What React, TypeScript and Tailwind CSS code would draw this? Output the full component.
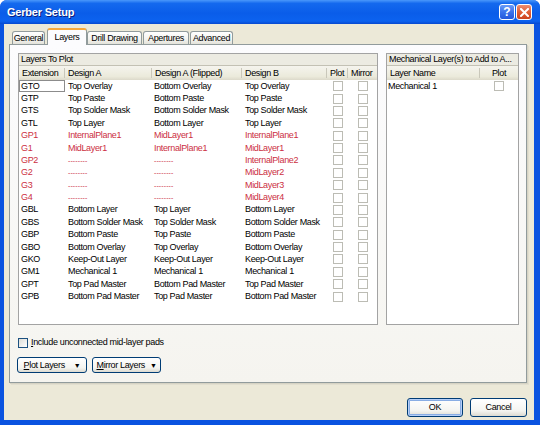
import React from 'react';

type Row = { ext: string; a: string; af: string; b: string; red?: boolean };

const dash = '--------';

const rows: Row[] = [
  { ext: 'GTO', a: 'Top Overlay', af: 'Bottom Overlay', b: 'Top Overlay' },
  { ext: 'GTP', a: 'Top Paste', af: 'Bottom Paste', b: 'Top Paste' },
  { ext: 'GTS', a: 'Top Solder Mask', af: 'Bottom Solder Mask', b: 'Top Solder Mask' },
  { ext: 'GTL', a: 'Top Layer', af: 'Bottom Layer', b: 'Top Layer' },
  { ext: 'GP1', a: 'InternalPlane1', af: 'MidLayer1', b: 'InternalPlane1', red: true },
  { ext: 'G1', a: 'MidLayer1', af: 'InternalPlane1', b: 'MidLayer1', red: true },
  { ext: 'GP2', a: dash, af: dash, b: 'InternalPlane2', red: true },
  { ext: 'G2', a: dash, af: dash, b: 'MidLayer2', red: true },
  { ext: 'G3', a: dash, af: dash, b: 'MidLayer3', red: true },
  { ext: 'G4', a: dash, af: dash, b: 'MidLayer4', red: true },
  { ext: 'GBL', a: 'Bottom Layer', af: 'Top Layer', b: 'Bottom Layer' },
  { ext: 'GBS', a: 'Bottom Solder Mask', af: 'Top Solder Mask', b: 'Bottom Solder Mask' },
  { ext: 'GBP', a: 'Bottom Paste', af: 'Top Paste', b: 'Bottom Paste' },
  { ext: 'GBO', a: 'Bottom Overlay', af: 'Top Overlay', b: 'Bottom Overlay' },
  { ext: 'GKO', a: 'Keep-Out Layer', af: 'Keep-Out Layer', b: 'Keep-Out Layer' },
  { ext: 'GM1', a: 'Mechanical 1', af: 'Mechanical 1', b: 'Mechanical 1' },
  { ext: 'GPT', a: 'Top Pad Master', af: 'Bottom Pad Master', b: 'Top Pad Master' },
  { ext: 'GPB', a: 'Bottom Pad Master', af: 'Top Pad Master', b: 'Bottom Pad Master' },
];

const cols = 'grid grid-cols-[46px_87px_90px_85px_21px_29px]';

function ListCheck() {
  return <span className="block w-[10px] h-[10px] border border-[#bcbcb4] bg-white" />;
}

function HeadCell({ label, center, last }: { label: string; center?: boolean; last?: boolean }) {
  return (
    <div className={`relative flex items-center h-full whitespace-nowrap ${center ? 'justify-center' : 'pl-[3px]'}`}>
      {label}
      {!last && <span className="absolute right-0 top-[2px] bottom-[2px] w-px bg-[#c9c7ba]" />}
    </div>
  );
}

function Caption({ text }: { text: string }) {
  return (
    <div className="h-[12px] flex items-center pl-[2px] bg-[#ecebe2] border-b border-[#c3c1b4] whitespace-nowrap overflow-hidden">
      {text}
    </div>
  );
}

function Cell({ text, className = '' }: { text: string; className?: string }) {
  return (
    <div className={`whitespace-nowrap ${text === dash ? 'text-[7px] tracking-[0.1px]' : ''} ${className}`}>
      {text}
    </div>
  );
}

function Tab({ label, active, className = '' }: { label: string; active?: boolean; className?: string }) {
  if (active) {
    return (
      <div
        className={`relative z-10 -mb-px h-[17px] flex items-center justify-center whitespace-nowrap bg-[#fcfcfe] border-x border-[#919b9c] rounded-t-[3px] border-t-2 border-t-[#f7a83a] ${className}`}
      >
        {label}
      </div>
    );
  }
  return (
    <div
      className={`h-[13px] flex items-center justify-center whitespace-nowrap bg-[linear-gradient(180deg,#ffffff_0%,#f3f3ef_60%,#e3e2da_100%)] border-x border-t border-[#919b9c] rounded-t-[3px] ${className}`}
    >
      {label}
    </div>
  );
}

function XpButton({ children, className = '', isDefault }: { children: React.ReactNode; className?: string; isDefault?: boolean }) {
  return (
    <div
      className={`flex items-center justify-center rounded-[3px] border border-[#003c74] bg-[linear-gradient(180deg,#ffffff_0%,#f4f4f0_70%,#dcdad0_100%)] ${
        isDefault ? 'shadow-[inset_0_0_0_1px_#b6cff8,inset_0_0_0_2px_#89ade4]' : ''
      } ${className}`}
    >
      {children}
    </div>
  );
}

export default function App() {
  return (
    <div className="w-[540px] h-[425px] bg-white font-['Liberation_Sans',Arial,sans-serif] text-[9px] tracking-[-0.35px] text-black leading-none">
      <div className="w-[540px] h-[425px] flex flex-col rounded-t-[7px] bg-[#0a53e0]">
        {/* Title bar */}
        <div className="h-[24px] shrink-0 flex items-center pl-[7px] pr-[8px] rounded-t-[7px] bg-[linear-gradient(180deg,#4a98fb_0%,#1469ee_14%,#0a5de9_55%,#0c62ef_88%,#0749cf_100%)]">
          <span className="text-white font-bold text-[11px] tracking-[-0.2px] [text-shadow:1px_1px_0_#0a1e80]">
            Gerber Setup
          </span>
          <div className="ml-auto flex gap-[1px]">
            <div className="w-[16px] h-[16px] rounded-[3px] border border-white bg-[linear-gradient(180deg,#6a9cf8_0%,#3a72ec_50%,#2357dc_100%)] flex items-center justify-center text-white font-bold text-[12px] tracking-normal">
              ?
            </div>
            <div className="w-[16px] h-[16px] rounded-[3px] border border-white bg-[linear-gradient(180deg,#ec8e70_0%,#e05e36_50%,#cc441f_100%)] flex items-center justify-center">
              <svg width="9" height="9" viewBox="0 0 9 9">
                <path d="M1 1 L8 8 M8 1 L1 8" stroke="white" strokeWidth="2" strokeLinecap="square" />
              </svg>
            </div>
          </div>
        </div>

        {/* Body */}
        <div className="flex-1 ml-[4px] mr-[6px] mb-[5px] bg-[#ece9d8] flex flex-col">
          {/* Tabs */}
          <div className="h-[20px] shrink-0 pt-[4px] pl-[8px] flex items-end">
            <Tab label="General" className="w-[33px]" />
            <Tab label="Layers" active className="w-[40px] ml-[2px]" />
            <Tab label="Drill Drawing" className="w-[55px]" />
            <Tab label="Apertures" className="w-[46px] ml-[1px]" />
            <Tab label="Advanced" className="w-[43px] ml-[1px]" />
          </div>

          {/* Tab panel */}
          <div className="ml-[5px] mr-[7px] h-[339px] shrink-0 border border-[#919b9c] bg-[linear-gradient(180deg,#fcfcfe_0%,#f5f4ef_100%)] shadow-[1px_1px_0_#d6d3c4,2px_2px_0_#e2dfd0] pt-[8px] pl-[8px] pr-[7px] flex flex-col">
            <div className="h-[272px] flex gap-[8px]">
              {/* Layers To Plot */}
              <div className="w-[360px] border border-[#a3a3a3] flex flex-col bg-white">
                <Caption text="Layers To Plot" />
                <div className={`${cols} h-[14px] bg-[linear-gradient(180deg,#f5f4ee_0%,#ebeadb_75%,#dcd9ca_100%)]`}>
                  <HeadCell label="Extension" />
                  <HeadCell label="Design A" />
                  <HeadCell label="Design A (Flipped)" />
                  <HeadCell label="Design B" />
                  <HeadCell label="Plot" />
                  <HeadCell label="Mirror" last />
                </div>
                <div className="flex-1 bg-white">
                  {rows.map((r, i) => (
                    <div
                      key={r.ext}
                      className={`${cols} h-[12.38px] items-center ${r.red ? 'text-[#cc2f42]' : ''}`}
                    >
                      <div
                        className={`h-full flex items-center ${
                          i === 0 ? 'pl-[1px] border border-[#8c8c8c]' : 'pl-[2px]'
                        }`}
                      >
                        {r.ext}
                      </div>
                      <Cell text={r.a} className="pl-[3px]" />
                      <Cell text={r.af} className="pl-[2px]" />
                      <Cell text={r.b} className="pl-[3px]" />
                      <div className="flex justify-center">
                        <ListCheck />
                      </div>
                      <div className="flex justify-center">
                        <ListCheck />
                      </div>
                    </div>
                  ))}
                </div>
              </div>

              {/* Mechanical layers */}
              <div className="flex-1 border border-[#a3a3a3] flex flex-col bg-white">
                <Caption text="Mechanical Layer(s) to Add to A..." />
                <div className="grid grid-cols-[93px_1fr] h-[14px] bg-[linear-gradient(180deg,#f5f4ee_0%,#ebeadb_75%,#dcd9ca_100%)]">
                  <HeadCell label="Layer Name" />
                  <HeadCell label="Plot" center last />
                </div>
                <div className="flex-1 bg-white">
                  <div className="grid grid-cols-[93px_1fr] h-[12.38px] items-center">
                    <div className="pl-[1px]">Mechanical 1</div>
                    <div className="flex justify-center">
                      <ListCheck />
                    </div>
                  </div>
                </div>
              </div>
            </div>

            {/* Include checkbox */}
            <div className="mt-[12px] h-[11px] flex items-center">
              <span className="w-[10px] h-[10px] border border-[#1c5180] bg-[linear-gradient(135deg,#dcdcd6_0%,#ffffff_100%)]" />
              <span className="ml-[3px]">
                <u>I</u>nclude unconnected mid-layer pads
              </span>
            </div>

            {/* Plot / Mirror buttons */}
            <div className="mt-[9px] flex gap-[5px] -ml-[1px]">
              <XpButton className="w-[70px] h-[16px] gap-[9px]">
                <span>
                  <u>P</u>lot Layers
                </span>
                <span className="text-[7px]">▼</span>
              </XpButton>
              <XpButton className="w-[69px] h-[16px] gap-[5px]">
                <span>
                  <u>M</u>irror Layers
                </span>
                <span className="text-[7px]">▼</span>
              </XpButton>
            </div>
          </div>

          {/* Dialog buttons */}
          <div className="mt-[15px] mr-[7px] flex justify-end gap-[7px]">
            <XpButton isDefault className="w-[56px] h-[19px]">
              OK
            </XpButton>
            <XpButton className="w-[57px] h-[19px]">Cancel</XpButton>
          </div>
        </div>
      </div>
    </div>
  );
}
